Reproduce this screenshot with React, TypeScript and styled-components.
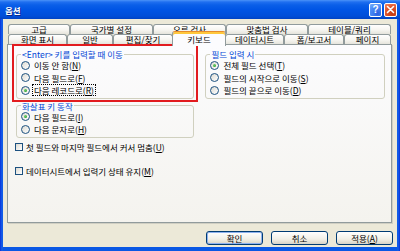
import React, { FC } from 'react';
import styled, { createGlobalStyle, css } from 'styled-components';

const GlobalStyle = createGlobalStyle`
  html, body {
    margin: 0;
    padding: 0;
    background: #ece9d8;
  }
  body {
    font-family: 'Noto Sans CJK KR', 'Noto Sans', sans-serif;
    font-size: 8.5px;
    color: #000;
  }
`;

type TabItem = { label: string; width: number; active?: boolean };

const backTabs: TabItem[] = [
  { label: '고급', width: 62 },
  { label: '국가별 설정', width: 83 },
  { label: '오류 검사', width: 73 },
  { label: '맞춤법 검사', width: 82 },
  { label: '테이블/쿼리', width: 83 },
];

const frontTabs: TabItem[] = [
  { label: '화면 표시', width: 59 },
  { label: '일반', width: 46 },
  { label: '편집/찾기', width: 60 },
  { label: '키보드', width: 52, active: true },
  { label: '데이터시트', width: 59 },
  { label: '폼/보고서', width: 60 },
  { label: '페이지', width: 47 },
];

type Option = { text: string; key: string; checked?: boolean; focused?: boolean };

const enterOptions: Option[] = [
  { text: '이동 안 함', key: 'N' },
  { text: '다음 필드로', key: 'F' },
  { text: '다음 레코드로', key: 'R', checked: true, focused: true },
];

const fieldOptions: Option[] = [
  { text: '전체 필드 선택', key: 'T', checked: true },
  { text: '필드의 시작으로 이동', key: 'S' },
  { text: '필드의 끝으로 이동', key: 'D' },
];

const arrowOptions: Option[] = [
  { text: '다음 필드로', key: 'I', checked: true },
  { text: '다음 문자로', key: 'H' },
];

const RadioList: FC<{ items: Option[] }> = ({ items }) => (
  <>
    {items.map((o) => (
      <OptionRow key={o.key}>
        <RadioDot checked={!!o.checked} />
        <OptionText focused={!!o.focused}>
          {o.text}(<u>{o.key}</u>)
        </OptionText>
      </OptionRow>
    ))}
  </>
);

export default function App() {
  return (
    <>
      <GlobalStyle />
      <Frame>
        <TitleBar>
          <Title>옵션</Title>
          <CaptionButton variant="help">?</CaptionButton>
          <CaptionButton variant="close">
            <svg width="9" height="9" viewBox="0 0 9 9">
              <path d="M1.5 1.5 L7.5 7.5 M7.5 1.5 L1.5 7.5" stroke="#fff" strokeWidth="1.6" strokeLinecap="round" />
            </svg>
          </CaptionButton>
        </TitleBar>

        <Client>
          <TabRow>
            {backTabs.map((t) => (
              <Tab key={t.label} width={t.width}>{t.label}</Tab>
            ))}
          </TabRow>
          <TabRow>
            {frontTabs.map((t) =>
              t.active ? (
                <ActiveTab key={t.label} width={t.width}>{t.label}</ActiveTab>
              ) : (
                <Tab key={t.label} width={t.width}>{t.label}</Tab>
              ),
            )}
          </TabRow>

          <Panel>
            <Columns>
              <LeftColumn>
                <Highlighted>
                  <Group>
                    <GroupLabel>&lt;Enter&gt; 키를 입력할 때 이동</GroupLabel>
                    <RadioList items={enterOptions} />
                  </Group>
                </Highlighted>
                <Group spaced>
                  <GroupLabel>화살표 키 동작</GroupLabel>
                  <RadioList items={arrowOptions} />
                </Group>
              </LeftColumn>
              <RightGroup>
                <GroupLabel>필드 입력 시</GroupLabel>
                <RadioList items={fieldOptions} />
              </RightGroup>
            </Columns>

            <CheckRow first>
              <CheckBox />
              <OptionText>첫 필드와 마지막 필드에서 커서 멈춤(<u>U</u>)</OptionText>
            </CheckRow>
            <CheckRow>
              <CheckBox />
              <OptionText>데이터시트에서 입력기 상태 유지(<u>M</u>)</OptionText>
            </CheckRow>
          </Panel>

          <ButtonBar>
            <PushButton primary>확인</PushButton>
            <PushButton>취소</PushButton>
            <PushButton>적용(<u>A</u>)</PushButton>
          </ButtonBar>
        </Client>
      </Frame>
    </>
  );
}

const Frame = styled.div`
  width: 400px;
  height: 251px;
  box-sizing: border-box;
  display: flex;
  flex-direction: column;
  background: linear-gradient(to right, #0831d9 0, #1660ea 2px, #0a58e4 3px, #0a58e4 397px, #1660ea 398px, #0831d9 100%);
  overflow: hidden;
`;

const TitleBar = styled.div`
  height: 19px;
  flex: none;
  display: flex;
  align-items: center;
  padding: 0 3px 0 5px;
  background: linear-gradient(
    to bottom,
    #4a93f8 0,
    #1f6ff0 2px,
    #0a5fe8 5px,
    #0055e5 50%,
    #004ed8 85%,
    #0043c4 100%
  );
`;

const Title = styled.span`
  flex: 1;
  color: #fff;
  font-size: 8.5px;
  font-weight: 700;
  text-shadow: 1px 1px 0 #0a2b8a;
`;

const CaptionButton = styled.div<{ variant: 'help' | 'close' }>`
  width: 13px;
  height: 14px;
  box-sizing: border-box;
  margin-left: 2px;
  border: 1px solid #fff;
  border-radius: 2px;
  display: flex;
  align-items: center;
  justify-content: center;
  color: #fff;
  font-family: 'Liberation Sans', sans-serif;
  font-size: 10px;
  font-weight: 700;
  ${({ variant }) =>
    variant === 'help'
      ? css`
          background: radial-gradient(circle at 70% 80%, #2d62e0, #4b8cf7 60%, #7fb1fb);
        `
      : css`
          background: radial-gradient(circle at 70% 80%, #c23a12, #e2572e 60%, #f08a6a);
        `}
`;

const Client = styled.div`
  flex: 1;
  display: flex;
  flex-direction: column;
  margin: 0 3px 4px;
  padding: 5px 5px 0 4px;
  background: #ece9d8;
`;

const TabRow = styled.div`
  display: flex;
  align-items: flex-start;
  height: 10px;
  padding-left: 1px;
`;

const Tab = styled.div<{ width: number }>`
  position: relative;
  width: ${({ width }) => width}px;
  height: 10px;
  flex: none;
  box-sizing: border-box;
  border: 1px solid #919b9c;
  border-bottom: none;
  border-radius: 3px 3px 0 0;
  background: linear-gradient(to bottom, #ffffff, #f6f5f0 55%, #e5e4dc);
  font-size: 8.5px;
  line-height: 9px;
  text-align: center;
  white-space: nowrap;
`;

const ActiveTab = styled(Tab)`
  z-index: 2;
  width: ${({ width }) => width + 2}px;
  height: 15px;
  margin: -3px -1px 0;
  border-top: 1px solid #e68b2c;
  box-shadow: inset 0 2px 0 #ffc83c;
  background: #fcfcfe;
  line-height: 14px;
`;

const Panel = styled.div`
  position: relative;
  height: 179px;
  flex: none;
  box-sizing: border-box;
  padding: 4px 6px 0 8px;
  border: 1px solid #919b9c;
  background: linear-gradient(to bottom, #fcfcfe, #f4f3ee);
  box-shadow: 1px 1px 0 #d0cfc3;
`;

const Columns = styled.div`
  display: flex;
  align-items: flex-start;
  gap: 11px;
`;

const LeftColumn = styled.div`
  width: 179px;
  display: flex;
  flex-direction: column;
`;

const Highlighted = styled.div`
  position: relative;

  &::after {
    content: '';
    position: absolute;
    left: -4px;
    right: -4px;
    top: -5px;
    bottom: -3px;
    border: 2px solid #e21b1f;
    pointer-events: none;
  }
`;

const Group = styled.fieldset<{ spaced?: boolean }>`
  margin: ${({ spaced }) => (spaced ? '2px 0 0' : '0')};
  padding: 0 4px 1px;
  min-width: 0;
  border: 1px solid #d0d0bf;
  border-radius: 3px;
`;

const RightGroup = styled(Group)`
  width: 180px;
  box-sizing: border-box;
`;

const GroupLabel = styled.legend`
  padding: 0 1px;
  color: #0046d5;
  font-size: 8.5px;
  line-height: 10px;
`;

const OptionRow = styled.div`
  display: flex;
  align-items: center;
  height: 12.5px;
`;

const RadioDot = styled.span<{ checked: boolean }>`
  position: relative;
  width: 9px;
  height: 9px;
  flex: none;
  box-sizing: border-box;
  border: 1px solid #1c5180;
  border-radius: 50%;
  background: linear-gradient(135deg, #dcdad2, #ffffff);
  margin-right: 2px;

  ${({ checked }) =>
    checked &&
    css`
      &::after {
        content: '';
        position: absolute;
        left: 2px;
        top: 2px;
        width: 3px;
        height: 3px;
        border-radius: 50%;
        background: radial-gradient(circle at 35% 35%, #6fd36f, #1e8f1e);
      }
    `}
`;

const OptionText = styled.span<{ focused?: boolean }>`
  font-size: 8.5px;
  line-height: 10px;
  white-space: nowrap;
  padding: 0 1px;
  border: 1px dotted ${({ focused }) => (focused ? '#000' : 'transparent')};
`;

const CheckRow = styled.div<{ first?: boolean }>`
  display: flex;
  align-items: center;
  height: 12px;
  margin: ${({ first }) => (first ? '3px 0 0 -1px' : '12px 0 0 -1px')};
`;

const CheckBox = styled.span`
  width: 8px;
  height: 8px;
  flex: none;
  box-sizing: border-box;
  border: 1px solid #1c5180;
  background: linear-gradient(135deg, #dcdad2, #ffffff);
  margin-right: 1px;
`;

const ButtonBar = styled.div`
  display: flex;
  justify-content: flex-end;
  gap: 8px;
  margin: 8px -1px 0 0;
`;

const PushButton = styled.button<{ primary?: boolean }>`
  width: 57px;
  height: 14px;
  padding: 0;
  box-sizing: border-box;
  border: 1px solid #003c74;
  border-radius: 3px;
  background: linear-gradient(to bottom, #ffffff, #f1efe6 60%, #d8d3c6);
  font-family: 'Noto Sans CJK KR', 'Noto Sans', sans-serif;
  font-size: 8.5px;
  line-height: 12px;
  color: #000;
  ${({ primary }) =>
    primary &&
    css`
      box-shadow: inset 0 0 0 1px #8fb2ee;
    `}
`;
